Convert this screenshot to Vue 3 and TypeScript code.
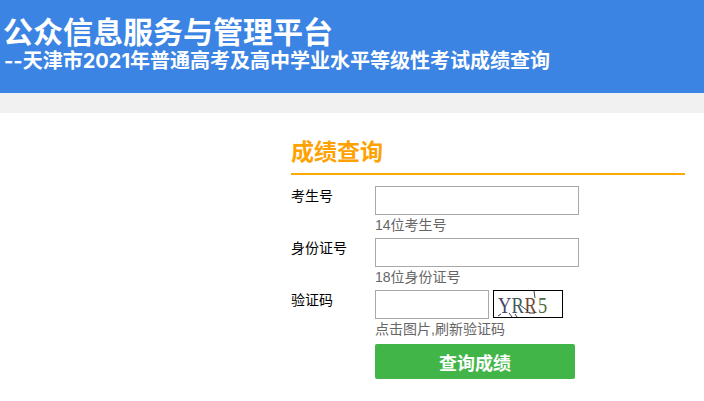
<script setup lang="ts">
interface Field {
  label: string
  hint: string
}
const fields: Field[] = [
  { label: '考生号', hint: '14位考生号' },
  { label: '身份证号', hint: '18位身份证号' },
]
const captchaLetters = [
  { ch: 'Y', x: 6.25, fill: '#4a4468' },
  { ch: 'R', x: 23.1, fill: '#3f5a5a' },
  { ch: 'R', x: 39.4, fill: '#70483c' },
  { ch: '5', x: 56.25, fill: '#4f6b45' },
]
</script>

<template>
  <div class="page">
    <header class="banner">
      <h1 class="title">公众信息服务与管理平台</h1>
      <h2 class="subtitle">--天津市2021年普通高考及高中学业水平等级性考试成绩查询</h2>
    </header>
    <div class="strip"></div>
    <main class="main">
      <section class="panel">
        <h3 class="panel-title">成绩查询</h3>
        <form class="form" @submit.prevent>
          <div v-for="f in fields" :key="f.label" class="row">
            <label class="label">{{ f.label }}</label>
            <div class="control">
              <input class="input" type="text" />
              <div class="hint">{{ f.hint }}</div>
            </div>
          </div>
          <div class="row">
            <label class="label">验证码</label>
            <div class="control">
              <div class="captcha-line">
                <input class="input short" type="text" />
                <svg class="captcha" width="70" height="28" viewBox="0 0 70 28" xmlns="http://www.w3.org/2000/svg">
                  <rect x="0.5" y="0.5" width="69" height="27" fill="#fff" stroke="#000" />
                  <g transform="scale(0.8 1)" font-family="Liberation Serif, serif" font-size="23">
                    <text
                      v-for="(l, i) in captchaLetters"
                      :key="i"
                      :x="l.x"
                      y="23"
                      :fill="l.fill"
                    >{{ l.ch }}</text>
                  </g>
                  <path d="M27 15l8 6M41 1l1 7M36 23h6M5 26l3-2M16 23l3 4M22 24l2 3" stroke="#111" stroke-width="0.8" fill="none" />
                </svg>
              </div>
              <div class="hint">点击图片,刷新验证码</div>
            </div>
          </div>
          <button class="submit" type="submit">查询成绩</button>
        </form>
      </section>
    </main>
  </div>
</template>

<style>
html, body { margin: 0; background: #fff; }
</style>

<style scoped>
.page {
  width: 704px;
  height: 401px;
  overflow: hidden;
  background: #fff;
  font-family: "Liberation Sans", "Noto Sans CJK SC", sans-serif;
}
.banner {
  height: 93px;
  box-sizing: border-box;
  padding: 16px 0 0 3px;
  background: #3c84e3;
  color: #fff;
}
.title {
  margin: 0;
  font-size: 30px;
  line-height: 33px;
  font-weight: 700;
}
.subtitle {
  margin: 0 0 0 1px;
  font-family: Inter, "Noto Sans CJK SC", sans-serif;
  font-size: 20px;
  line-height: 24px;
  font-weight: 700;
  white-space: nowrap;
}
.strip {
  height: 20px;
  background: #f1f1f1;
}
.main {
  padding: 24px 19px 0 291px;
}
.panel-title {
  margin: 0;
  height: 36px;
  border-bottom: 2px solid #ffa800;
  color: #ffa200;
  font-size: 23px;
  line-height: 31px;
  font-weight: 700;
}
.form {
  padding-top: 11px;
}
.row {
  display: flex;
  height: 52px;
}
.label {
  width: 84px;
  flex: none;
  font-size: 14px;
  line-height: 20px;
  color: #000;
}
.control {
  flex: 1;
}
.input {
  display: block;
  box-sizing: border-box;
  width: 204px;
  height: 29px;
  margin: 0;
  padding: 0 4px;
  border: 1px solid #a9a9a9;
  background: #fff;
  outline: none;
}
.input.short {
  width: 114px;
}
.captcha-line {
  display: flex;
  align-items: flex-start;
  gap: 4px;
}
.captcha {
  display: block;
}
.hint {
  font-size: 14px;
  line-height: 20px;
  color: #666;
  white-space: nowrap;
}
.submit {
  display: block;
  width: 200px;
  height: 35px;
  margin: 2px 0 0 84px;
  padding: 0;
  border: none;
  border-radius: 2px;
  background: #42b549;
  color: #fff;
  font-family: inherit;
  font-size: 18px;
  font-weight: 700;
}
</style>
